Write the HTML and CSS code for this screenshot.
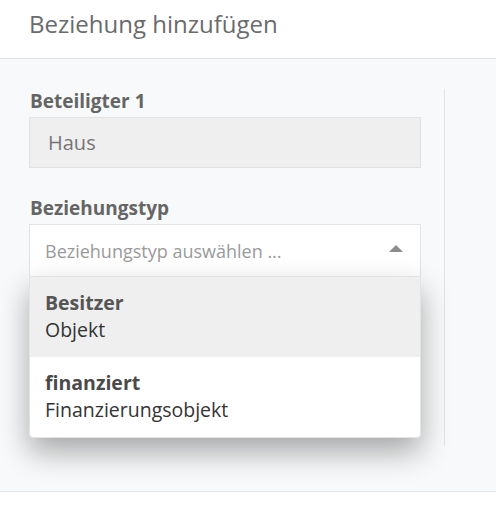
FILE: index.html
```html
<!DOCTYPE html>
<html lang="de">
<head>
<meta charset="utf-8">
<link rel="stylesheet" href="styles.css">
</head>
<body>
<div class="modal">
  <header class="modal-header">
    <h1 class="modal-title">Beziehung hinzufügen</h1>
  </header>
  <div class="modal-body">
    <div class="form-col">
      <div class="field">
        <label class="field-label">Beteiligter 1</label>
        <div class="input-readonly">Haus</div>
      </div>
      <div class="field field-select">
        <label class="field-label">Beziehungstyp</label>
        <div class="select-wrap">
          <div class="select-box">
            <span class="placeholder">Beziehungstyp auswählen ...</span>
            <span class="caret"></span>
          </div>
          <ul class="dropdown">
            <li class="option active">
              <span class="opt-title">Besitzer</span>
              <span class="opt-sub">Objekt</span>
            </li>
            <li class="option">
              <span class="opt-title">finanziert</span>
              <span class="opt-sub">Finanzierungsobjekt</span>
            </li>
          </ul>
        </div>
      </div>
    </div>
    <div class="side-col"></div>
  </div>
  <footer class="modal-footer"></footer>
</div>
</body>
</html>
```
FILE: styles.css
```css
* { box-sizing: border-box; }
html, body { margin: 0; padding: 0; background: #fff; }
body { font-family: "Open Sans", "Noto Sans", sans-serif; color: #555; }

.modal { width: 496px; height: 520px; display: flex; flex-direction: column; }

.modal-header {
  height: 59px;
  border-bottom: 1px solid #e3e4e6;
  padding: 0 29px;
  display: flex;
  align-items: center;
  background: #fff;
}
.modal-title {
  margin: 0;
  margin-top: -11px;
  font-size: 24px;
  font-weight: 400;
  color: #6a6b6d;
}

.modal-body {
  height: 433px;
  background: #f8f9fa;
  border-bottom: 1px solid #e3e4e6;
  display: flex;
  padding: 30px 0 0 29px;
}
.form-col {
  width: 416px;
  padding-right: 23px;
  border-right: 1px solid #e2e3e5;
  height: 357px;
}
.field-label {
  display: block;
  font-weight: 700;
  font-size: 19px;
  color: #656565;
  line-height: 24px;
  margin-left: 1px;
}
.input-readonly {
  margin-top: 4px;
  height: 51px;
  background: #efefef;
  border: 1px solid #e2e2e2;
  padding: 0 18px;
  font-size: 20px;
  line-height: 49px;
  color: #757575;
}
.field-select { margin-top: 28px; }
.select-wrap { position: relative; margin-top: 4px; }
.select-box {
  height: 52px;
  background: #fff;
  border: 1px solid #e3e3e3;
  border-bottom: none;
  padding: 0 16px 0 15px;
  display: flex;
  align-items: center;
  justify-content: space-between;
}
.placeholder { font-size: 18px; color: #9a9a9a; }
.caret {
  width: 0; height: 0;
  border-left: 7px solid transparent;
  border-right: 7px solid transparent;
  border-bottom: 7px solid #8c8c8c;
  margin-right: 1px;
  margin-top: -4px;
}
.dropdown {
  position: absolute;
  left: 0; right: 0; top: 52px;
  margin: 0; padding: 0;
  list-style: none;
  background: #fff;
  border: 1px solid #e3e3e3;
  border-radius: 0 0 4px 4px;
  box-shadow: 0 14px 30px rgba(0,0,0,0.33);
  overflow: hidden;
}
.option {
  height: 80px;
  padding: 12px 15px 0;
  display: flex;
  flex-direction: column;
}
.option.active { background: #efefef; }
.opt-title { font-weight: 700; font-size: 19.5px; line-height: 27px; color: #555; }
.opt-sub { font-size: 19.5px; line-height: 27px; color: #333; }
.option:not(.active) .opt-title { color: #4a4a4a; }

.side-col { flex: 1; }
.modal-footer { flex: 1; background: #fff; }
```
